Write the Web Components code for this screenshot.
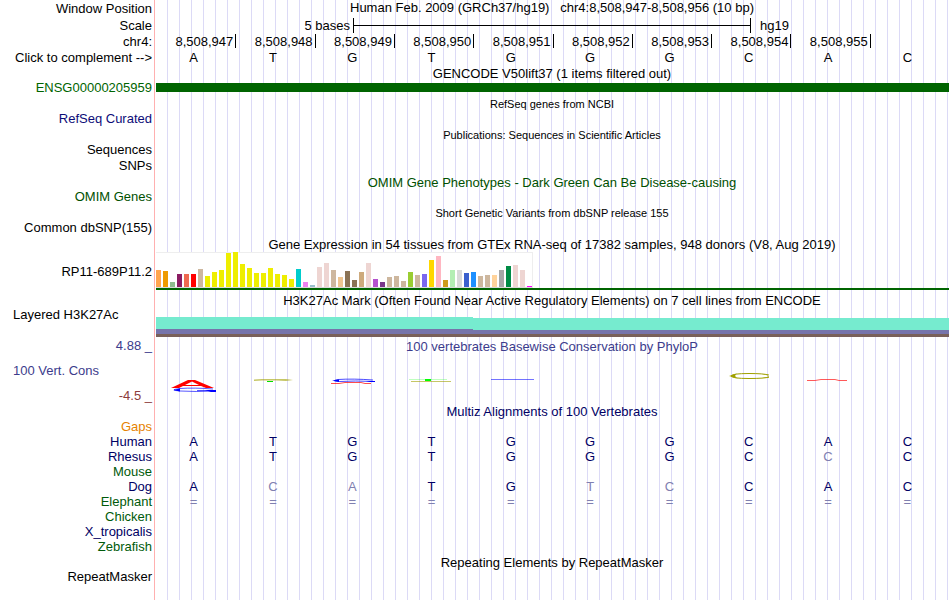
<!DOCTYPE html>
<html lang="en">
<head>
<meta charset="utf-8">
<title>Human chr4:8,508,947-8,508,956</title>
<style>
  body { margin: 0; background: #fff; color: #000; font: 13px/15px "Liberation Sans", Arial, sans-serif; }
</style>
</head>
<body>
<genome-browser>
  <track-row label="Window Position" size="head"><track-title top>Human Feb. 2009 (GRCh37/hg19) &nbsp; chr4:8,508,947-8,508,956 (10 bp)</track-title></track-row>
  <track-row label="Scale" size="scale"><scale-bar left="5 bases" right="hg19"></scale-bar></track-row>
  <track-row label="chr4:" size="item"><position-ruler start="8508947" count="9"></position-ruler></track-row>
  <track-row label="Click to complement --&gt;" action><base-row bases="ATGTGGGCAC"></base-row></track-row>

  <track-row><track-title>GENCODE V50lift37 (1 items filtered out)</track-title></track-row>
  <track-row label="ENSG00000205959" size="item" style="--label:#006400"><gene-bar></gene-bar></track-row>
  <track-row><track-title small>RefSeq genes from NCBI</track-title></track-row>
  <track-row label="RefSeq Curated" size="item" style="--label:#0c0c78"></track-row>
  <track-row><track-title small>Publications: Sequences in Scientific Articles</track-title></track-row>
  <track-row label="Sequences" size="item"></track-row>
  <track-row label="SNPs" size="item"></track-row>
  <track-row><track-title style="color:#005000">OMIM Gene Phenotypes - Dark Green Can Be Disease-causing</track-title></track-row>
  <track-row label="OMIM Genes" size="item" style="--label:#005000"></track-row>
  <track-row><track-title small>Short Genetic Variants from dbSNP release 155</track-title></track-row>
  <track-row label="Common dbSNP(155)" size="item"></track-row>

  <track-row><track-title>Gene Expression in 54 tissues from GTEx RNA-seq of 17382 samples, 948 donors (V8, Aug 2019)</track-title></track-row>
  <track-row label="RP11-689P11.2" size="chart"><expression-chart></expression-chart></track-row>

  <track-row><track-title>H3K27Ac Mark (Often Found Near Active Regulatory Elements) on 7 cell lines from ENCODE</track-title></track-row>
  <track-row label="Layered H3K27Ac" size="signal" near><signal-layers></signal-layers></track-row>

  <conservation-track></conservation-track>

  <track-row size="item"><track-title style="color:#000064">Multiz Alignments of 100 Vertebrates</track-title></track-row>
  <track-row label="Gaps" style="--label:#e68200"></track-row>
  <track-row label="Human" style="--label:#000064"><base-row bases="ATGTGGGCAC"></base-row></track-row>
  <track-row label="Rhesus" style="--label:#000064"><base-row bases="ATGTGGGCcC"></base-row></track-row>
  <track-row label="Mouse" style="--label:#005a0a"></track-row>
  <track-row label="Dog" style="--label:#000064"><base-row bases="AcaTGtcCAC"></base-row></track-row>
  <track-row label="Elephant" style="--label:#005a0a"><base-row bases="=========="></base-row></track-row>
  <track-row label="Chicken" style="--label:#005a0a"></track-row>
  <track-row label="X_tropicalis" style="--label:#000064"></track-row>
  <track-row label="Zebrafish" style="--label:#005a0a"></track-row>

  <track-row><track-title>Repeating Elements by RepeatMasker</track-title></track-row>
  <track-row label="RepeatMasker"></track-row>
</genome-browser>

<script>
const define = (name, render) => customElements.define(name, class extends HTMLElement {
  constructor() { super(); this.attachShadow({ mode: "open" }); }
  connectedCallback() { this.shadowRoot.innerHTML = render(this); }
});

define("genome-browser", () => `
  <style>
    :host {
      display: flex; flex-direction: column; min-height: 100vh; --label-width: 154px;
      background:
        linear-gradient(#ffb0b0, #ffb0b0) 154px 0 / 1px 100% no-repeat,
        repeating-linear-gradient(90deg, transparent 0 11px, #dcdaf6 11px 12px) 156px 0 no-repeat;
    }
  </style><slot></slot>`);

define("track-row", el => {
  const label = el.getAttribute("label") || "";
  return `
  <style>
    :host { display: grid; grid-template-columns: var(--label-width) minmax(0, 1fr); min-height: 15px; align-items: start; }
    :host([size=head]) { min-height: 16px; }
    :host([size=head]) .label { align-self: end; }
    :host([size=item]) { min-height: 16px; }
    :host([size=scale]) { min-height: 18px; align-items: center; }
    :host([size=chart]) { min-height: 41px; }
    :host([size=chart]) .label { align-self: center; }
    :host([size=signal]) { min-height: 31px; }
    .label, button { color: var(--label, #000); text-align: right; padding: 0 2px 0 0; white-space: nowrap; }
    :host([near]) .label { text-align: left; padding: 0 0 0 13px; }
    button { font: inherit; border: 0; background: none; cursor: pointer; }
    .data { color: var(--label, #000); min-width: 0; }
  </style>
  ${el.hasAttribute("action") ? `<button type="button">${label}</button>` : `<span class="label">${label}</span>`}
  <div class="data"><slot></slot></div>`;
});

define("track-title", () => `
  <style>
    :host { display: block; text-align: center; white-space: nowrap; line-height: 13px; padding-top: 2px; }
    :host([top]) { padding-top: 1px; }
    :host([small]) { font-size: 11px; }
  </style><slot></slot>`);

define("scale-bar", el => `
  <style>
    :host { display: grid; grid-template-columns: 1fr 2fr 1fr; align-items: center; }
    .left { text-align: right; padding-right: 3px; }
    .right { padding-left: 9px; }
    .bar { height: 15px; border: solid #000; border-width: 0 1px; display: flex; align-items: center; }
    .bar::before { content: ""; flex: 1; height: 1px; background: #000; }
  </style>
  <span class="left">${el.getAttribute("left")}</span><span class="bar"></span><span class="right">${el.getAttribute("right")}</span>`);

define("position-ruler", el => {
  const start = +el.getAttribute("start");
  const cells = Array.from({ length: +el.getAttribute("count") },
    (_, i) => `<span>${(start + i).toLocaleString("en-US")}</span>`).join("");
  return `
  <style>
    :host { display: grid; grid-template-columns: repeat(10, minmax(0, 1fr)); padding-left: 3px; }
    span { text-align: right; padding-right: 2px; border-right: 1px solid #000; height: 14px; }
  </style>${cells}`;
});

define("base-row", el => `
  <style>
    :host { display: grid; grid-template-columns: repeat(10, minmax(0, 1fr)); padding-right: 3px; text-align: center; }
    .differs { color: #8080b0; }
  </style>
  ${[...el.getAttribute("bases")].map(b =>
    `<span${/[a-z=]/.test(b) ? ' class="differs"' : ""}>${b.toUpperCase()}</span>`).join("")}`);

define("gene-bar", () => `
  <style>:host { display: block; height: 9px; margin: 3px 1px 0 2px; background: #006400; }</style>`);

const TISSUES = [
  ["#ffa54f", 17], ["#ee9a00", 16], ["#8fbc8f", 5], ["#8b1c62", 13], ["#ee6a50", 13], ["#ff0000", 13],
  ["#cdb79e", 18], ["#eeee00", 11], ["#eeee00", 15], ["#eeee00", 17], ["#eeee00", 34], ["#eeee00", 35],
  ["#eeee00", 23], ["#eeee00", 19], ["#eeee00", 14], ["#eeee00", 14], ["#eeee00", 19], ["#eeee00", 13],
  ["#eeee00", 12], ["#eeee00", 8], ["#00cdcd", 18], ["#ee82ee", 5], ["#9ac0cd", 2], ["#eed5d2", 20],
  ["#eed5d2", 24], ["#cdb79e", 17], ["#eec591", 10], ["#8b7355", 16], ["#8b7355", 7], ["#cdaa7d", 15],
  ["#eed5d2", 24], ["#b452cd", 8], ["#7a378b", 5], ["#cdb79e", 10], ["#cdb79e", 11], ["#cdb79e", 6],
  ["#9acd32", 15], ["#cdb79e", 12], ["#7a67ee", 13], ["#ffd700", 27], ["#ffb6c1", 31], ["#cd9b1d", 7],
  ["#b4eeb4", 17], ["#d9d9d9", 17], ["#3a5fcd", 14], ["#1e90ff", 15], ["#cdb79e", 11], ["#cdb79e", 12],
  ["#ffd39b", 12], ["#a6a6a6", 17], ["#008b45", 21], ["#eed5d2", 22], ["#eed5d2", 17], ["#ff00ff", 1]
];
define("expression-chart", () => `
  <style>
    :host { display: flow-root; margin: 1px 1px 0 2px; border-bottom: 2px solid #006400; }
    .plot { display: flex; gap: 2px; align-items: flex-end; width: max-content; height: 35px;
      background: #fff; box-shadow: inset 0 1px #eee; border: solid #eee; border-width: 0 1px 1px 0; border-bottom-color: #d8d8d8; }
    i { width: 5px; }
  </style>
  <div class="plot">${TISSUES.map(([c, h]) => `<i style="background:${c};height:${h}px"></i>`).join("")}</div>`);

define("signal-layers", () => `
  <style>
    :host { display: grid; grid-template-columns: 2fr 3fr; margin: 10px 1px 0 2px; height: 20px; }
    div { display: flex; flex-direction: column; }
    .a { height: 12px; background: #76ebcf; }
    .b { flex: 1; background: #7674ab; }
    .c { height: 3px; background: #79605a; }
    div + div { margin-top: 1px; }
  </style>
  <div><span class="a"></span><span class="b"></span><span class="c"></span></div>
  <div><span class="a"></span><span class="b"></span><span class="c"></span></div>`);

define("conservation-track", () => `
  <style>
    :host { display: grid; grid-template-columns: var(--label-width) minmax(0, 1fr); color: #3c3c8c; }
    .labels { display: flex; flex-direction: column; justify-content: space-between; text-align: right; padding-right: 2px; }
    .name { text-align: left; padding-left: 13px; }
    .low { color: #8c3c3c; }
    svg { display: block; width: calc(100% - 3px); height: 50px; margin-left: 2px; }
  </style>
  <div class="labels"><span>4.88 _</span><span class="name">100 Vert. Cons</span><span class="low">-4.5 _</span></div>
  <div>
    <track-title>100 vertebrates Basewise Conservation by PhyloP</track-title>
    <svg viewBox="156 353 793 50" preserveAspectRatio="none" aria-label="Conservation scores" role="img">
      <path fill="#f00" fill-rule="evenodd" d="M171 388 188 380H195L214 388H206L201 386H183L179 388ZM185 385H199L192 381.500Z"/>
      <path fill="none" stroke="#00f" stroke-opacity=".65" d="M213 389Q194 387.500 180 388.500Q168 390 180 391Q196 392 215 391M197 390.500H212"/>
      <path fill="#00f" d="M173 390 180 388.500V391.500ZM205 390 216 390V392H211Z"/>
      <path fill="#a0a000" fill-opacity=".6" d="M254 379.500 262 379H286L293 380L286 381L276 380.500H262L254 381Z"/>
      <path fill="#00e000" d="M267 381h6v1h-6z"/>
      <path fill="none" stroke="#00f" stroke-opacity=".7" d="M373 380Q353 378.500 338 379.500Q330 381 340 381.500Q354 380.500 374 381.500"/>
      <path fill="#00f" d="M332 380.500 339 379.500V382ZM366 381H375V382H370Z"/>
      <path fill="none" stroke="#f00" stroke-opacity=".7" d="M331 383.500H339L345 382.500H361L365 383.500H371"/>
      <path fill="#0f0" fill-opacity=".25" d="M409 379h38v1h-38z"/>
      <path fill="#0f0" d="M425 379h6v2h-6z"/>
      <path fill="#a0a000" fill-opacity=".6" d="M411 381H451V382H411Z"/>
      <path fill="#00f" fill-opacity=".55" d="M491 379H534V380H491Z"/>
      <path fill="none" stroke="#a0a000" d="M768 375Q764 373.500 749 373.500Q732 373.500 731 376Q732 378.500 749 378.500Q765 378.500 769 377"/>
      <path fill="#a0a000" d="M729 376 737 373.500Q733 376 738 378.500ZM762 374 769 374.500V375.500ZM762 378 769 376.500V377.500Z"/>
      <path fill="none" stroke="#f00" stroke-opacity=".65" d="M807 380.500H815L821 379.500H835L839 380.500H847"/>
    </svg>
  </div>`);
</script>
</body>
</html>
